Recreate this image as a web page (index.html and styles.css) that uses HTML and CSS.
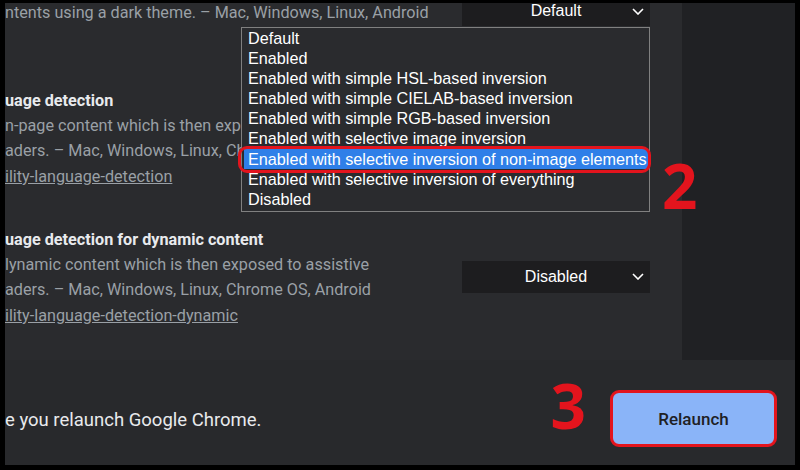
FILE: index.html
```html
<!DOCTYPE html>
<html lang="en">
<head>
    <meta charset="UTF-8">
    <title>Flags - Relaunch</title>
    <link rel="stylesheet" href="styles.css">
</head>
<body>
    <div class="frame">
        <div class="window">
            <div class="upper">
                <div class="main">
                    <div class="flag flag-cut">
                        <div class="flag-info">
                            <p class="flag-desc">ntents using a dark theme. – Mac, Windows, Linux, Android</p>
                        </div>
                        <div class="select">
                            <span class="select-value">Default</span>
                            <svg class="chevron" width="12" height="7" viewBox="0 0 12 7"><polyline points="1,1 6,6 11,1" fill="none" stroke="#fff" stroke-width="1.6"/></svg>
                        </div>
                    </div>

                    <div class="flag">
                        <div class="flag-info flag-info-covered">
                            <h3 class="flag-name">uage detection</h3>
                            <p class="flag-desc">n-page content which is then expo<br>aders. – Mac, Windows, Linux, Ch</p>
                            <a class="flag-link" href="#">ility-language-detection</a>
                        </div>
                    </div>

                    <div class="flag">
                        <div class="flag-info">
                            <h3 class="flag-name">uage detection for dynamic content</h3>
                            <p class="flag-desc">lynamic content which is then exposed to assistive<br>aders. – Mac, Windows, Linux, Chrome OS, Android</p>
                            <a class="flag-link" href="#">ility-language-detection-dynamic</a>
                        </div>
                        <div class="select select-low">
                            <span class="select-value">Disabled</span>
                            <svg class="chevron" width="12" height="7" viewBox="0 0 12 7"><polyline points="1,1 6,6 11,1" fill="none" stroke="#fff" stroke-width="1.6"/></svg>
                        </div>
                    </div>

                    <!-- open list of the first select -->
                    <ul class="dropdown">
                        <li>Default</li>
                        <li>Enabled</li>
                        <li>Enabled with simple HSL-based inversion</li>
                        <li>Enabled with simple CIELAB-based inversion</li>
                        <li>Enabled with simple RGB-based inversion</li>
                        <li>Enabled with selective image inversion</li>
                        <li class="selected">Enabled with selective inversion of non-image elements</li>
                        <li>Enabled with selective inversion of everything</li>
                        <li>Disabled</li>
                    </ul>
                </div>
                <div class="side"></div>
                <span class="step step-2">2</span>
            </div>

            <div class="footer">
                <p class="footer-text">e you relaunch Google Chrome.</p>
                <div class="actions">
                    <span class="step step-3">3</span>
                    <button class="relaunch">Relaunch</button>
                </div>
            </div>
        </div>
    </div>
</body>
</html>
```

FILE: styles.css
```css
html, body {
    margin: 0;
    padding: 0;
    background-color: #000;
}

.frame {
    width: 800px;
    height: 470px;
    box-sizing: border-box;
    padding: 3px 5px 5px 5px;
    background-color: #000;
}

.window {
    display: flex;
    flex-direction: column;
    height: 100%;
    font-family: Roboto, "Liberation Sans", sans-serif;
}

.upper {
    position: relative;
    display: flex;
    flex: 1;
    min-height: 0;
}

.main {
    position: relative;
    flex: 1;
    overflow: hidden;
    background-color: #2a2b2e;
}

.side {
    width: 113px;
    background-color: #202124;
}

.flag {
    display: flex;
    align-items: center;
    justify-content: space-between;
    margin-bottom: 38px;
}

.flag-cut {
    height: 30px;
    margin-top: -7px;
    margin-bottom: 63px;
}

.flag-cut .flag-desc {
    padding-top: 2px;
}

.flag-info {
    white-space: nowrap;
}

/* the open list hides the rest of this one */
.flag-info-covered {
    width: 236px;
    overflow: hidden;
}

.flag-name {
    margin: 0;
    font-size: 16.2px;
    line-height: 24px;
    font-weight: bold;
    color: #e8eaed;
}

.flag-desc {
    margin: 0;
    font-size: 16.2px;
    line-height: 25px;
    color: #9aa0a6;
}

.flag-link {
    display: block;
    font-size: 16.2px;
    line-height: 27px;
    color: #9aa0a6;
}

.select {
    display: grid;
    grid-template-columns: 1fr auto 1fr;
    align-items: center;
    width: 188px;
    height: 32px;
    margin-right: 32px;
    background-color: #1d1d1f;
    font-family: "Liberation Sans", Arial, sans-serif;
    font-size: 16px;
    color: #fff;
}

.flag-cut .select {
    height: 30px;
}

.select-low {
    margin-bottom: 4px;
}

.select-value {
    grid-column: 2;
}

.chevron {
    grid-column: 3;
    justify-self: end;
    margin-right: 6px;
}

.dropdown {
    position: absolute;
    left: 236px;
    top: 24px;
    width: 407px;
    margin: 0;
    padding: 0 0 2px 0;
    list-style: none;
    border: 1px solid #808080;
    background-color: #2a2b2e;
    font-family: "Liberation Sans", Arial, sans-serif;
    font-size: 16.2px;
    line-height: 20px;
    color: #fff;
    white-space: nowrap;
}

.dropdown li {
    padding-left: 5px;
    margin: 0 1px;
}

.dropdown li.selected {
    position: relative;
    background-color: #2f7fe8;
    padding-left: 4px;
    margin: 1px 1px 0 2px;
}

.dropdown li.selected::after {
    content: "";
    position: absolute;
    left: -6px;
    right: -3px;
    top: -3px;
    bottom: -4px;
    border: 3px solid #e3141d;
    border-radius: 9px;
}

.step {
    font-family: "Open Sans", "Liberation Sans", sans-serif;
    font-weight: bold;
    font-size: 62px;
    line-height: 1;
    color: #e3141d;
}

.step-2 {
    position: absolute;
    left: 657px;
    top: 151px;
}

.step-3 {
    margin-top: -28px;
}

.footer {
    display: flex;
    align-items: center;
    justify-content: space-between;
    height: 105px;
    box-sizing: border-box;
    padding: 30px 18px 18px 0;
    background-color: #28292c;
}

.footer-text {
    margin: 0;
    font-size: 18.5px;
    color: #e8eaed;
    padding-top: 2px;
}

.actions {
    display: flex;
    align-items: center;
    gap: 24px;
}

.relaunch {
    width: 167px;
    height: 57px;
    border: 3px solid #e3141d;
    border-radius: 9px;
    background-color: #8ab4f8;
    color: #202124;
    font-family: Roboto, "Liberation Sans", sans-serif;
    font-size: 17px;
    font-weight: 500;
}
```
